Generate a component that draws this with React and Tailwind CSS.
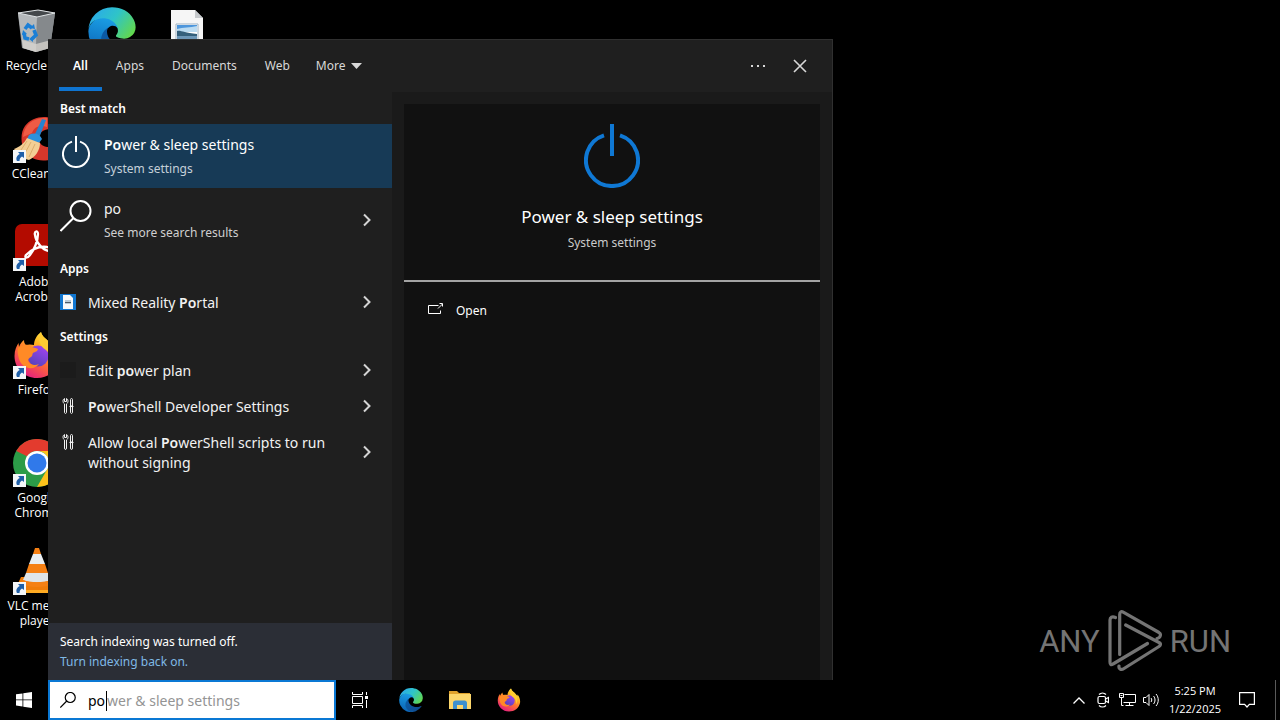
import { useState } from 'react'

function EdgeIcon({ size, id }) {
  return (
    <svg width={size} height={size} viewBox="0 0 256 260" aria-hidden="true">
      <defs>
        <linearGradient id={`${id}-a`} x1="0.3" y1="0.3" x2="1" y2="1">
          <stop offset="0" stopColor="#0c59a4" />
          <stop offset="1" stopColor="#114a8b" />
        </linearGradient>
        <linearGradient id={`${id}-b`} x1="0.6" y1="0" x2="0.4" y2="1">
          <stop offset="0" stopColor="#1ba0e6" />
          <stop offset="1" stopColor="#0b62b5" />
        </linearGradient>
        <linearGradient id={`${id}-c`} x1="0" y1="0.2" x2="1" y2="0.7">
          <stop offset="0" stopColor="#2aa8ec" />
          <stop offset="0.5" stopColor="#2fc4c8" />
          <stop offset="1" stopColor="#62d84e" />
        </linearGradient>
      </defs>
      <path fill={`url(#${id}-a)`} d="M235.68 195.46a93.73 93.73 0 0 1-10.54 4.71 101.87 101.87 0 0 1-35.9 6.46c-47.32 0-88.54-32.55-88.54-74.32A31.48 31.48 0 0 1 117.13 105c-42.8 1.8-53.8 46.4-53.8 72.53 0 73.88 68.09 81.37 82.76 81.37 7.91 0 19.84-2.3 27-4.56l1.31-.44a128.34 128.34 0 0 0 66.6-52.8 4 4 0 0 0-5.32-5.64z" />
      <path fill={`url(#${id}-b)`} d="M105.73 246.27a79.2 79.2 0 0 1-22.74-21.34 80.72 80.72 0 0 1 34.14-119.93c3.12-1.47 8.45-4.13 15.54-4a32.35 32.35 0 0 1 25.69 13 31.88 31.88 0 0 1 6.36 18.66c0-.21 24.46-79.6-80-79.6-43.9 0-84.72 41.66-84.72 78.21a130.15 130.15 0 0 0 12.11 56 128 128 0 0 0 156.38 67.11 75.55 75.55 0 0 1-62.78-8z" />
      <path fill={`url(#${id}-c)`} d="M152.33 149.86c-.81 1.05-3.3 2.5-3.3 5.66 0 2.61 1.7 5.12 4.72 7.23 14.38 10 41.49 8.68 41.56 8.68a59.56 59.56 0 0 0 30.27-8.35 61.38 61.38 0 0 0 30.43-52.88c.26-22.41-8-37.31-11.34-43.91C223.46 23.84 177.72 1.29 128 1.29A128 128 0 0 0 0 127.5c.48-36.54 36.8-66.05 80-66.05 3.5 0 23.46.34 42 10.07 16.34 8.58 24.9 18.94 30.85 29.21 6.18 10.67 7.28 24.15 7.28 29.52 0 5.37-2.74 13.33-7.8 19.61z" />
    </svg>
  )
}

function FirefoxIcon({ size, id }) {
  return (
    <svg width={size} height={size} viewBox="0 0 48 48" aria-hidden="true">
      <defs>
        <linearGradient id={`${id}-a`} x1="0.8" y1="0.05" x2="0.25" y2="0.95">
          <stop offset="0" stopColor="#fff04f" />
          <stop offset="0.3" stopColor="#ffb41f" />
          <stop offset="0.6" stopColor="#ff6a35" />
          <stop offset="1" stopColor="#e5207f" />
        </linearGradient>
        <linearGradient id={`${id}-b`} x1="0.8" y1="0" x2="0.2" y2="1">
          <stop offset="0" stopColor="#a343f0" />
          <stop offset="1" stopColor="#5043b8" />
        </linearGradient>
      </defs>
      <path fill={`url(#${id}-a)`} d="M28 1c1 5 6 7 10 12 1 1 2 2 2.500 3.500L41 13c4 5 6 11 5 17C44 40 35 47 24 47 11 47 1.500 37 1.500 25c0-6 2-10 4-13l.5 4c1-3 3-5.500 5-7 0 3 1 4 2 5 3-1 6-.5 8 0C21 9 24 4 28 1z" />
      <circle cx="25" cy="25" r="10.500" fill={`url(#${id}-b)`} />
      <path fill="#ff8a26" d="M5 17c5-4 11-4 14-1 2 1 5 1 6 2 0 2-3 3-5 4-1 1 0 3-2 4-2 1-3 2-3 4 2 4 7 5 11 3-5 7-17 5-20-5-1-4-2-8-1-11z" />
      <path fill="#ffcb31" d="M28 1c1 5 6 7 10 12 4 6 4 14 0 20 1-7-1-11-5-14-6-4-9-10-5-18z" />
    </svg>
  )
}

function RecycleBinIcon() {
  return (
    <svg width="48" height="48" viewBox="0 0 48 48" aria-hidden="true">
      <path d="M5 7 27 3l15 3-5 35-14 4-14-4z" fill="#8f9396" />
      <path d="M5 6 24 10l-1 35-13-4z" fill="#b4b8ba" />
      <path d="M24 10 42 6l-5 35-14 4z" fill="#85898c" />
      <path d="M5 6 25 3l17 3-18 4z" fill="#44484b" stroke="#dfe3e5" />
      <path d="m9 33 14 4 15-4-1 8-14 4-13-4z" fill="#d9d5cf" opacity=".75" />
      <g fill="none" stroke="#1b7fd6" strokeWidth="3.600">
        <path d="m12 22 3-4 4 3" />
        <path d="m21 23 2 5-4 4" />
        <path d="m16 32-4-1-1-5" />
      </g>
      <path d="m17 21 5 1-1-5zM20 29v6l-4-3zM9 28l1-5 4 4z" fill="#1b7fd6" />
    </svg>
  )
}

function ImageFileIcon() {
  return (
    <svg width="48" height="48" viewBox="0 0 48 48" aria-hidden="true">
      <path d="M8 3h24l8 8v35H8z" fill="#f6f6f6" />
      <path d="M32 3v8h8z" fill="#c6c9cc" />
      <path d="M13 17h22v18H13z" fill="#fff" stroke="#9fb3c4" />
      <path d="M14 18h20v7H14z" fill="#4d96dc" />
      <path d="M14 22c6-2 13-1 20-3v6H14z" fill="#bcdcf2" />
      <path d="M14 24c4-1 7 2 20 3v7H14z" fill="#35607c" />
      <path d="M14 29h20v5H14z" fill="#6d97b8" />
    </svg>
  )
}

function CCleanerIcon() {
  return (
    <svg width="48" height="48" viewBox="0 0 48 48" aria-hidden="true">
      <path d="M46 8C38-1 20 0 12 11c-5 7-4 18-1 24 5 9 17 13 28 9l7-4V32H34c-7-1-9-6-8-11 2-6 8-8 20-7z" fill="#d7372b" />
      <path d="M34 3C20 2 11 10 10 22l9-4c3-7 8-8 15-6z" fill="#ef5b45" />
      <path d="m29 4 4 1-7 18-5-2z" fill="#2583d0" />
      <path d="M16 20c5-3 11-1 13 4l-3 4-12-4z" fill="#2d91db" />
      <path d="M14 23 27 28c0 8-5 14-11 17-5-1-11-5-15-11 5-2 10-5 13-11z" fill="#f3cf95" />
      <path d="m14 26-6 9m10-8-7 13m11-11-6 13" stroke="#dcae6c" />
    </svg>
  )
}

function AcrobatIcon() {
  return (
    <svg width="48" height="48" viewBox="0 0 48 48" aria-hidden="true">
      <rect x="2" y="1" width="44" height="42" rx="7" fill="#b30b00" />
      <path d="M13 32c-2 3 1 4 4 0 4-5 8-14 8-21 0-4-4-3-3 1 1 8 8 15 14 16 5 1 4-4-2-4-7-1-15 2-21 8z" fill="none" stroke="#fff" strokeWidth="2.300" strokeLinejoin="round" />
    </svg>
  )
}

function ChromeIcon() {
  return (
    <svg width="48" height="48" viewBox="0 0 48 48" aria-hidden="true">
      <circle cx="24" cy="24" r="24" fill="#2c9c48" />
      <path d="M44.800 12A24 24 0 0 1 24 48l10.400-18A12 12 0 0 0 24 12z" fill="#fcc21b" />
      <path d="M3.200 12A24 24 0 0 1 44.800 12H24a12 12 0 0 0-11 8z" fill="#e33b2e" />
      <path d="m3.200 12 10.400 18 8-5-8-8z" fill="#2c9c48" />
      <circle cx="24" cy="24" r="12" fill="#fff" />
      <circle cx="24" cy="24" r="9.500" fill="#3079ea" />
    </svg>
  )
}

function VlcIcon() {
  return (
    <svg width="48" height="48" viewBox="0 0 48 48" aria-hidden="true">
      <path d="m8 30-6 13v2h44v-2l-6-13z" fill="#f07c09" />
      <path d="M2 43h44v3H2z" fill="#ffab22" />
      <path d="M22 1h4l2 6h-8z" fill="#f58014" />
      <path d="M20 7h8l4 10H16z" fill="#e9eef2" />
      <path d="M16 17h16l3 9H13z" fill="#f58014" />
      <path d="M13 26h22l3 7c-7 3-21 3-28 0z" fill="#dfe4e8" />
      <path d="M10 33c7 3 21 3 28 0l1 4c-7 4-23 4-30 0z" fill="#f58014" />
    </svg>
  )
}

function ShortcutArrow() {
  return (
    <svg width="13" height="13" viewBox="0 0 13 13" className="absolute bottom-0 left-0" aria-hidden="true">
      <path d="M0 0h13v13H0z" fill="#f4f6f8" />
      <path d="M5 2h6v6L9 6.500C7 8 6.500 9 6.500 11H4C2.500 8 4 5.500 6.800 4z" fill="#1f5fa8" />
    </svg>
  )
}

function PowerIcon({ className }) {
  return (
    <svg viewBox="0 0 56 64" className={className} fill="none" stroke="currentColor" strokeWidth="4" aria-hidden="true">
      <path d="M28 0v32M20 11.300a26 26 0 1 0 16 0" />
    </svg>
  )
}

function SearchIcon({ className, strokeWidth = 1 }) {
  return (
    <svg viewBox="0 0 32 32" className={className} fill="none" stroke="currentColor" strokeWidth={strokeWidth} aria-hidden="true">
      <circle cx="20.500" cy="11" r="10" />
      <path d="M13.500 18 .5 31" />
    </svg>
  )
}

function ToolsIcon() {
  return (
    <svg width="16" height="16" viewBox="0 0 16 16" fill="none" stroke="#f0f0f0" aria-hidden="true">
      <path d="M4.500.5v3h2v-3c2 1 2 4 0 5.500v8c0 2-2 2-2 0V6c-2-1.500-2-4.500 0-5.500z" />
      <path d="M10.500 1.500c0-1.300 2-1.300 2 0V8h-2zM9.500 8.500h4M10.500 8.500V14c0 2 2 2 2 0V8.500" />
    </svg>
  )
}

function PortalIcon() {
  return (
    <svg width="16" height="16" viewBox="0 0 16 16" aria-hidden="true">
      <path d="M0 0h16v16H0z" fill="#1177d1" />
      <path d="M3 1h7l3 3v11H3z" fill="#f7f9fb" />
      <path d="M5 6h6v4H5z" fill="#b9cbd9" />
      <path d="M5 8h6v1H5z" fill="#4d5b66" />
    </svg>
  )
}

function Chevron() {
  return (
    <svg width="8" height="14" viewBox="0 0 8 14" fill="none" stroke="#d4d4d4" strokeWidth="2" className="shrink-0" aria-hidden="true">
      <path d="m1 1.500 5.500 5.500L1 12.500" />
    </svg>
  )
}

const desktopIcons = [
  { name: 'Recycle Bin', icon: <RecycleBinIcon /> },
  { name: 'CCleaner', icon: <CCleanerIcon />, shortcut: true },
  { name: 'Adobe Acrobat', icon: <AcrobatIcon />, shortcut: true },
  { name: 'Firefox', icon: <FirefoxIcon size={48} id="ff-desk" />, shortcut: true },
  { name: 'Google Chrome', icon: <ChromeIcon />, shortcut: true },
  { name: 'VLC media player', icon: <VlcIcon />, shortcut: true },
  { name: '', icon: <EdgeIcon size={48} id="edge-desk" /> },
  { name: '', icon: <ImageFileIcon /> },
]

const tabs = ['All', 'Apps', 'Documents', 'Web']

const appResults = [{ icon: <PortalIcon />, text: ['Mixed Reality ', 'Po', 'rtal'] }]

const settingResults = [
  { icon: <span className="size-4 bg-[#1b1b1b]" />, text: ['Edit ', 'po', 'wer plan'] },
  { icon: <ToolsIcon />, text: ['', 'Po', 'werShell Developer Settings'] },
  { icon: <ToolsIcon />, text: ['Allow local ', 'Po', 'werShell scripts to run'], rest: 'without signing' },
]

function DesktopIcon({ name, icon, shortcut }) {
  return (
    <div className="flex h-[108px] w-[74px] flex-col items-center pt-[7px]">
      <div className="relative size-12">
        {icon}
        {shortcut && <ShortcutArrow />}
      </div>
      <span className="mt-[3px] w-[70px] text-center font-['Open_Sans',sans-serif] text-[12px] leading-[15px] text-white">
        {name}
      </span>
    </div>
  )
}

function GroupTitle({ children }) {
  return <h2 className="flex h-8 items-center px-3 pt-px text-[12px] font-semibold text-white">{children}</h2>
}

function ResultRow({ icon, text: [before, match, after], rest }) {
  return (
    <button className="flex w-full items-center pt-[9px] pr-[21px] pb-[7px] pl-3 text-left">
      <span className="flex h-5 w-7 shrink-0 items-center self-start pb-0.5">{icon}</span>
      <span className="flex-1 text-[14px] leading-5 text-[#f2f2f2]">
        {before}
        <b className="font-semibold">{match}</b>
        {after}
        {rest && <span className="block">{rest}</span>}
      </span>
      <span className="pb-0.5">
        <Chevron />
      </span>
    </button>
  )
}

function SearchPanel() {
  const [tab, setTab] = useState('All')

  return (
    <section className="absolute top-[39px] bottom-0 left-12 flex w-[785px] flex-col border-t border-r border-[#303030] bg-[#1f1f1f]">
      <header className="flex h-[51px] shrink-0 items-stretch pr-[11px] pl-[11px] text-[12px] text-[#d8d8d8]">
        {tabs.map((t) => (
          <button
            key={t}
            onClick={() => setTab(t)}
            className={
              t === tab
                ? 'border-b-4 border-[#0f74d0] px-[14px] pt-1 font-semibold text-white'
                : 'border-b-4 border-transparent px-[14px] pt-1'
            }
          >
            {t}
          </button>
        ))}
        <button className="flex items-center gap-[6px] px-3">
          More
          <svg width="11" height="6" viewBox="0 0 11 6" fill="currentColor" aria-hidden="true">
            <path d="M0 0h11L5.500 6z" />
          </svg>
        </button>
        <button className="ml-auto flex w-[42px] items-center justify-center" aria-label="Options">
          <svg width="16" height="2" viewBox="0 0 16 2" fill="currentColor" aria-hidden="true">
            <path d="M1 0h2v2H1zM7 0h2v2H7zM13 0h2v2h-2z" />
          </svg>
        </button>
        <button className="flex w-[42px] items-center justify-center" aria-label="Close">
          <svg width="14" height="14" viewBox="0 0 14 14" fill="none" stroke="currentColor" strokeWidth="1.600" aria-hidden="true">
            <path d="m1 1 12 12M13 1 1 13" />
          </svg>
        </button>
      </header>

      <div className="flex min-h-0 flex-1 pt-px">
        <div className="flex w-[344px] flex-col">
          <GroupTitle>Best match</GroupTitle>
          <button className="flex h-16 w-full items-start bg-[#173a56] px-3 pt-[10px] text-left">
            <PowerIcon className="mt-0.5 mr-3 w-8 px-0.5 text-white" />
            <span>
              <span className="block text-[14px] leading-[22px] text-white">
                <b className="font-semibold">Po</b>wer &amp; sleep settings
              </span>
              <span className="mt-[3px] block text-[12px] leading-5 text-[#c5d0d9]">System settings</span>
            </span>
          </button>
          <button className="flex h-16 w-full items-start pt-[10px] pr-[21px] pl-3 text-left">
            <SearchIcon className="mt-0.5 mr-3 size-8 text-white" strokeWidth={2} />
            <span className="flex-1">
              <span className="block text-[14px] leading-[22px] text-[#f2f2f2]">po</span>
              <span className="mt-[3px] block text-[12px] leading-5 text-[#cfcfcf]">See more search results</span>
            </span>
            <span className="pt-[15px]">
              <Chevron />
            </span>
          </button>
          <GroupTitle>Apps</GroupTitle>
          {appResults.map((r) => (
            <ResultRow key={r.text[2]} {...r} />
          ))}
          <GroupTitle>Settings</GroupTitle>
          {settingResults.map((r) => (
            <ResultRow key={r.text[2]} {...r} />
          ))}
          <div className="mt-auto bg-[#2b2e36] px-3 pt-[9px] pb-2 text-[12px] leading-5">
            <p className="text-white">Search indexing was turned off.</p>
            <a href="#indexing" className="block text-[#7fb9e6]">
              Turn indexing back on.
            </a>
          </div>
        </div>

        <div className="flex flex-1 flex-col bg-[#1a1a1a] px-3 pt-3">
          <div className="flex-1 bg-[#111111]">
            <div className="flex flex-col items-center border-b-2 border-[#a3a3a3] pt-5 pb-[27px]">
              <PowerIcon className="w-14 text-[#0f78d4]" />
              <h1 className="mt-[17px] text-[17px] leading-6 text-white">Power &amp; sleep settings</h1>
              <p className="mt-1 text-[12px] leading-5 text-[#cacaca]">System settings</p>
            </div>
            <button className="mt-[9px] flex h-10 w-full items-center gap-3 px-6 text-[12px] text-white">
              <span className="pb-1">
                <svg width="16" height="12" viewBox="0 0 16 12" fill="none" stroke="currentColor" aria-hidden="true">
                  <path d="M10.500 2.500H.5v8h12V7.500M10 5.500l4.500-4.500M11.500.5h3v3" />
                </svg>
              </span>
              Open
            </button>
          </div>
        </div>
      </div>
    </section>
  )
}

function Watermark() {
  return (
    <div className="absolute right-[49px] bottom-[8px] flex items-center gap-2 font-['Liberation_Sans_Narrow','Roboto',sans-serif] text-[31px] leading-none text-[#747474]">
      <span>ANY</span>
      <svg width="54" height="62" viewBox="0 0 54 62" fill="none" stroke="currentColor" strokeWidth="3.200" strokeLinejoin="round" strokeLinecap="round" aria-hidden="true">
        <path d="M7.500 7.500C4 6 2 7.500 2 10v42c0 2.500 1 3.500 3 2l34.500-20.500" />
        <path d="M11.700 44.500V4.500c0-2.500 1.500-3.500 3.500-2.300L51 22.500c2.500 1.500 1.500 5.500-2 6" />
        <path d="m17.700 15 33.300 17.500c2 1 2 2.500 0 4L16 58.500c-3 2-5.500.5-5-2.500" />
      </svg>
      <span>RUN</span>
    </div>
  )
}

function Taskbar() {
  const [query, setQuery] = useState('po')

  return (
    <footer className="flex h-10 shrink-0 items-stretch bg-black text-white">
      <button className="flex w-12 items-center justify-center" aria-label="Start">
        <svg width="16" height="16" viewBox="0 0 16 16" fill="#fff" aria-hidden="true">
          <path d="m0 2.300 6.500-.9v6.100H0zM7.300 1.300 16 0v7.500H7.300zM0 8.300h6.500v6.200L0 13.600zM7.300 8.300H16V16l-8.700-1.300z" />
        </svg>
      </button>
      <label className="flex w-[288px] items-center border-2 border-[#0a78d4] bg-white pl-[10px]">
        <SearchIcon className="mr-3 size-4 text-black" strokeWidth={2.4} />
        <span className="relative flex flex-1 items-center pt-0.5">
          <input
            value={query}
            onChange={(e) => setQuery(e.target.value)}
            aria-label="Search"
            className="w-full text-[14px] leading-5 text-black outline-none"
          />
          {query === 'po' && (
            <span className="pointer-events-none absolute left-[18px] border-l border-black text-[14px] leading-5 text-[#949494]">
              wer &amp; sleep settings
            </span>
          )}
        </span>
      </label>
      <button className="flex w-12 items-center justify-center" aria-label="Task View">
        <svg width="16" height="16" viewBox="0 0 16 16" fill="none" stroke="#fff" aria-hidden="true">
          <path d="M.5 0v2.500h10V0M.5 4.500h10v7H.5zM.5 16v-2.500h10V16M14.500 0v3M14.500 8v8" />
          <path d="M13 4h3v3h-3z" fill="#fff" stroke="none" />
        </svg>
      </button>
      <button className="ml-[3px] flex w-12 items-center justify-center" aria-label="Microsoft Edge">
        <EdgeIcon size={24} id="edge-bar" />
      </button>
      <button className="ml-px flex w-12 items-center justify-center" aria-label="File Explorer">
        <svg width="22" height="20" viewBox="0 0 22 20" aria-hidden="true">
          <path d="M0 1h8l2 2h11v5H0z" fill="#e0a22c" />
          <path d="M0 4h22v15H0z" fill="#fcd66b" />
          <path d="M4 19v-6c0-1.500 1-2.500 2.500-2.500h9c1.500 0 2.500 1 2.500 2.500v6h-4v-4H8v4z" fill="#3d90ce" />
        </svg>
      </button>
      <button className="ml-px flex w-12 items-center justify-center" aria-label="Firefox">
        <FirefoxIcon size={24} id="ff-bar" />
      </button>

      <div className="ml-auto flex items-stretch">
        <button className="flex w-6 items-center justify-center" aria-label="Show hidden icons">
          <svg width="12" height="7" viewBox="0 0 12 7" fill="none" stroke="#fff" strokeWidth="1.300" aria-hidden="true">
            <path d="m.5 6.500 5.500-5.500 5.500 5.500" />
          </svg>
        </button>
        <button className="flex w-6 items-center justify-center" aria-label="Meet Now">
          <svg width="12" height="16" viewBox="0 0 12 16" fill="none" stroke="#fff" strokeWidth="1.200" aria-hidden="true">
            <path d="M2 2.500c2-2 5-2 7 0M2 13.500c2 2 5 2 7 0" />
            <rect x="1" y="4.500" width="7.500" height="7" rx="1.500" />
            <path d="m8.500 7 3-1.500v5L8.500 9z" />
          </svg>
        </button>
        <button className="flex w-6 items-center justify-center" aria-label="Network">
          <svg width="17" height="14" viewBox="0 0 17 14" fill="none" stroke="#fff" aria-hidden="true">
            <path d="M5.500 1.500h11v8h-12M10.500 9.500v3M6.500 12.500h8M.5.500h4v4h-4zM2.500 4.500v8h2M1.500 2.500h2" />
          </svg>
        </button>
        <button className="flex w-6 items-center justify-center" aria-label="Volume">
          <svg width="17" height="14" viewBox="0 0 17 14" fill="none" stroke="#fff" aria-hidden="true">
            <path d="M.5 4.500h2.500l3-3v11l-3-3H.5zM8 5c1 1.200 1 2.800 0 4M10.500 3c2 2.300 2 5.700 0 8M13 1c3 3.400 3 8.600 0 12" />
          </svg>
        </button>
        <div className="flex w-[64px] flex-col items-center justify-center font-['Open_Sans',sans-serif] text-[11px] leading-[18px] whitespace-nowrap">
          <span>5:25 PM</span>
          <span>1/22/2025</span>
        </div>
        <button className="flex w-10 items-center justify-center" aria-label="Notifications">
          <svg width="16" height="16" viewBox="0 0 16 16" fill="none" stroke="#fff" strokeWidth="1.200" aria-hidden="true">
            <path d="M.6.6h14.800v11.800h-5L8 15l-2.400-2.600h-5z" />
          </svg>
        </button>
        <div className="ml-2 w-[5px] border-l border-[#5a5a5a]" />
      </div>
    </footer>
  )
}

export default function App() {
  return (
    <div className="flex h-screen flex-col overflow-hidden bg-black font-['Noto_Sans','Open_Sans',sans-serif]">
      <main className="relative flex-1 overflow-hidden">
        <div className="grid w-max grid-flow-col grid-rows-6 gap-x-px">
          {desktopIcons.slice(0, 6).map((d) => (
            <DesktopIcon key={d.name} {...d} />
          ))}
          {desktopIcons.slice(6).map((d, i) => (
            <div key={i} className={i === 0 ? 'col-start-2 row-start-1' : 'col-start-3 row-start-1'}>
              <DesktopIcon {...d} />
            </div>
          ))}
        </div>
        <SearchPanel />
        <Watermark />
      </main>
      <Taskbar />
    </div>
  )
}
